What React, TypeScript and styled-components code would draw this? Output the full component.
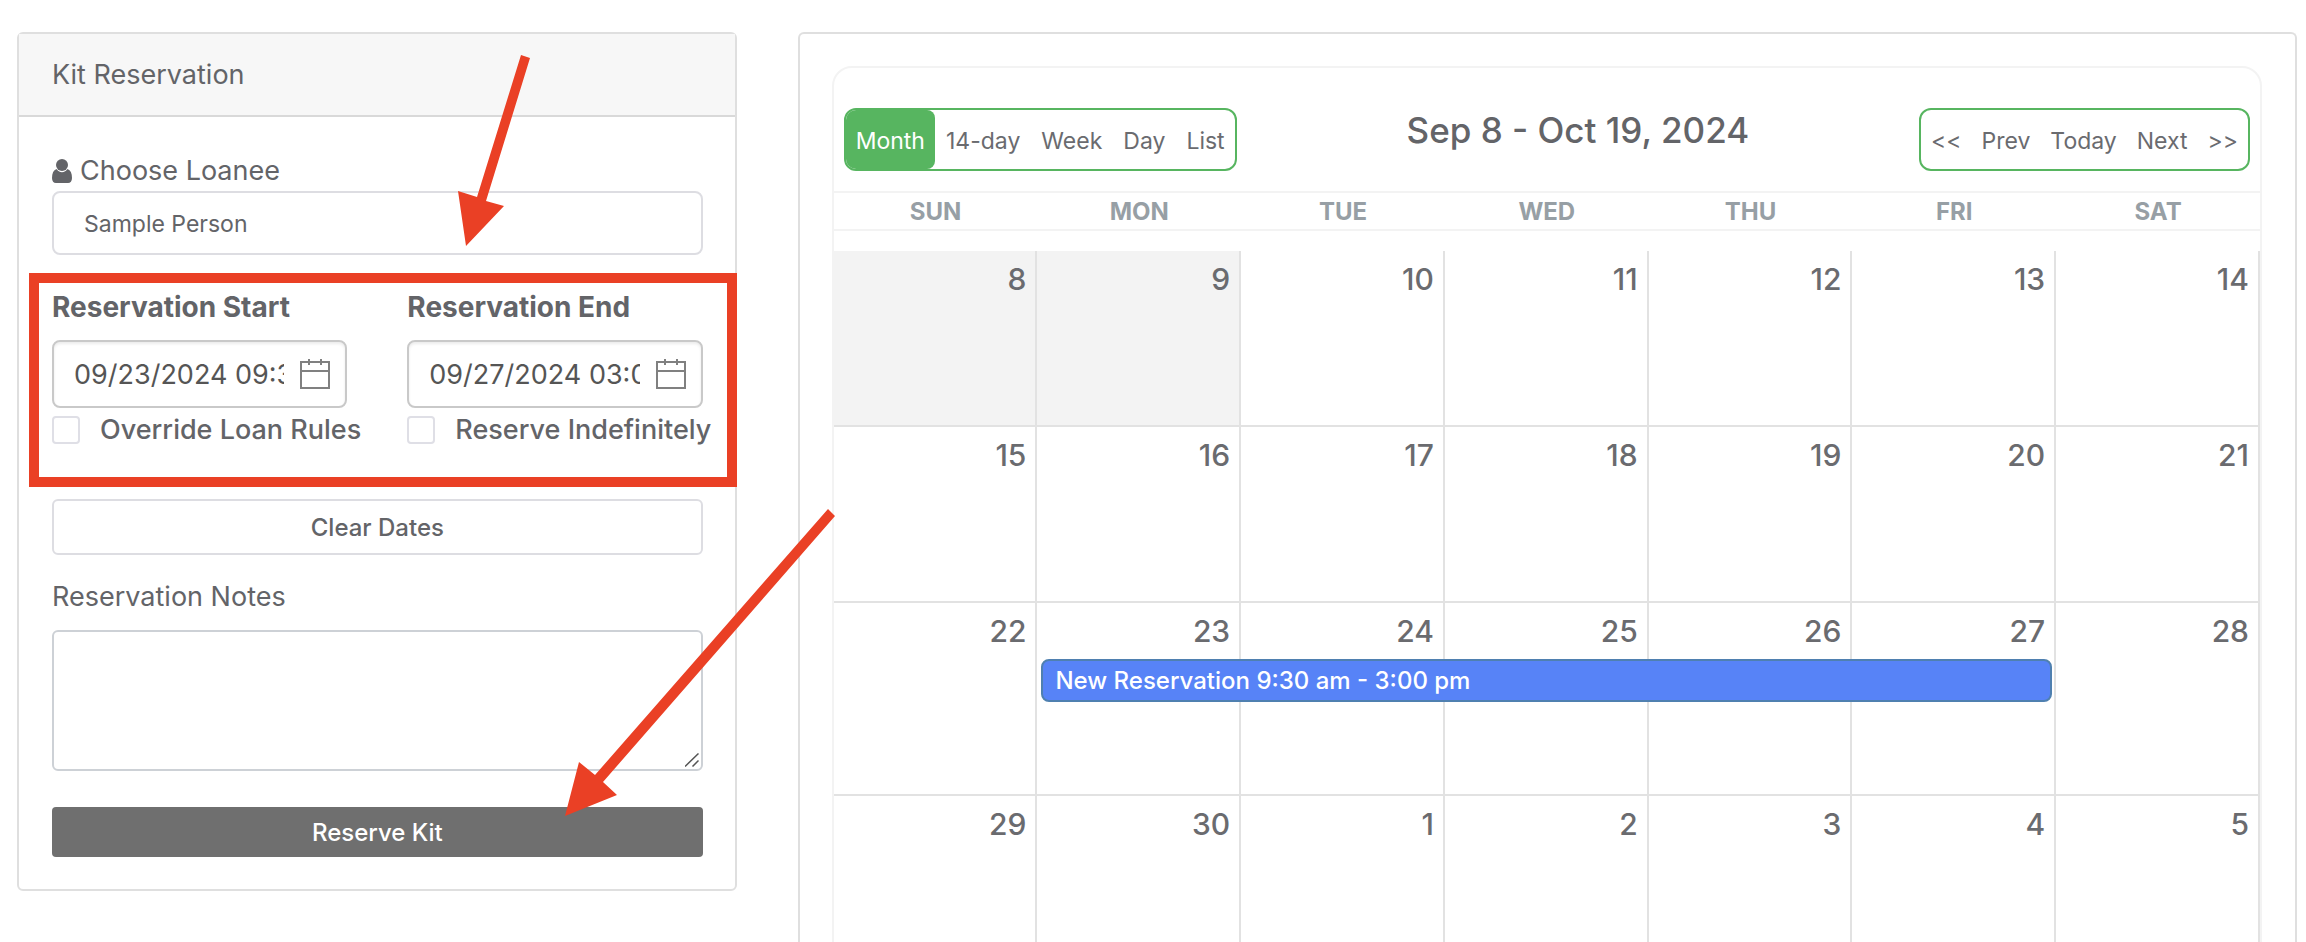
import React from "react";
import styled, { createGlobalStyle, css } from "styled-components";

const GlobalStyle = createGlobalStyle`
  *, *::before, *::after { box-sizing: border-box; }
  body {
    margin: 0;
    background: #fff;
    color: #636468;
    font: 400 28px/40px Inter, "Liberation Sans", sans-serif;
  }
  button, input, select, textarea { font: inherit; color: inherit; margin: 0; }
`;

const Page = styled.main`
  position: relative;
  display: grid;
  grid-template-columns: minmax(0, 12fr) minmax(0, 25fr);
  gap: 61px;
  align-items: start;
  padding: 32px 9px 0 17px;
`;

/* Reservation form */

const FormCard = styled.section`
  border: 2px solid #dfdfdf;
  border-radius: 6px;
`;

const CardHeader = styled.h1`
  margin: 0;
  padding: 21px 33px 20px;
  border-bottom: 2px solid #d9d9d9;
  background: #f7f7f7;
  font-size: 27px;
  font-weight: 400;
  line-height: 40px;
`;

const Form = styled.form`
  display: flex;
  flex-direction: column;
  padding: 34px 32px 32px 33px;
`;

const FieldLabel = styled.label`
  display: flex;
  align-items: center;
  gap: 8px;
  font-size: 27px;
  line-height: 40px;
`;

const LoaneeSelect = styled.select`
  width: 100%;
  height: 64px;
  padding: 2px 30px 0;
  border: 2px solid #dddde2;
  border-radius: 8px;
  background: #fff;
  font-size: 23px;
  appearance: none;
`;

const DateFields = styled.div`
  position: relative;
  display: grid;
  grid-template-columns: minmax(0, 1fr) minmax(0, 1fr);
  gap: 60px;
  margin: 18px 0 12px;
  padding: 14px 0 37px;
`;

const Highlight = styled.div`
  position: absolute;
  inset: 0 -34px 0 -23px;
  border: 10px solid #ea4025;
  pointer-events: none;
`;

const DateField = styled.div`
  display: flex;
  flex-direction: column;
`;

const DateLabel = styled.label`
  margin-bottom: 13px;
  font-size: 28px;
  font-weight: 700;
  line-height: 40px;
`;

const DateBox = styled.div`
  display: flex;
  align-items: center;
  gap: 16px;
  height: 68px;
  margin-bottom: 2px;
  padding: 0 15px 0 20px;
  border: 2px solid #c9c9c9;
  border-radius: 8px;
  box-shadow: inset 0 2px 3px rgba(0, 0, 0, 0.08);
`;

const DateInput = styled.input`
  flex: 1;
  min-width: 0;
  padding: 2px 0 0;
  border: 0;
  background: none;
  color: #555;
  font-size: 27px;
`;

const CheckRow = styled.label`
  display: flex;
  align-items: center;
  gap: 20px;
  font-size: 27px;
  font-weight: 500;
  line-height: 40px;
  white-space: nowrap;
`;

const CheckBox = styled.input`
  flex: none;
  width: 28px;
  height: 28px;
  border: 2px solid #dfdfe6;
  border-radius: 4px;
  background: #fff;
  appearance: none;
`;

const FormButton = styled.button<{ $solid?: boolean }>`
  width: 100%;
  padding: 2px 0 0;
  border-radius: 6px;
  font-size: 24px;
  font-weight: 500;
  ${(p) =>
    p.$solid
      ? css`
          height: 50px;
          border: 0;
          border-radius: 4px;
          background: #6f6f6f;
          color: #fff;
        `
      : css`
          height: 56px;
          border: 2px solid #dddde2;
          background: #fff;
        `}
`;

const NotesField = styled.div`
  display: flex;
  flex-direction: column;
  gap: 13px;
  margin: 22px 0 36px;
`;

const NotesBox = styled.div`
  position: relative;
`;

const Notes = styled.textarea`
  display: block;
  width: 100%;
  height: 141px;
  padding: 12px;
  border: 2px solid #cdd1d6;
  border-radius: 6px;
  resize: none;
`;

const Grip = styled.svg`
  position: absolute;
  right: 4px;
  bottom: 4px;
  pointer-events: none;
`;

/* Calendar */

const CalendarCard = styled.section`
  max-height: calc(100vh - 32px);
  overflow: hidden;
  padding: 32px 33px 0 32px;
  border: 2px solid #dfdfdf;
  border-bottom: 0;
  border-radius: 6px 6px 0 0;
`;

const Calendar = styled.div`
  border: 2px solid #f3f3f3;
  border-radius: 20px 20px 0 0;
`;

const Toolbar = styled.header`
  display: flex;
  align-items: flex-start;
  justify-content: space-between;
  padding: 40px 10px 20px;
`;

const Title = styled.h2`
  margin: 0;
  font-size: 35px;
  font-weight: 500;
  line-height: 44px;
`;

const ButtonGroup = styled.div<{ $spaced?: boolean }>`
  display: flex;
  gap: ${(p) => (p.$spaced ? 1 : 0)}px;
  height: 63px;
  border: 2px solid #57b560;
  border-radius: 12px;
  overflow: hidden;
`;

const GroupButton = styled.button<{ $active?: boolean }>`
  padding: 2px 10px 0;
  border: 0;
  border-radius: 0 8px 8px 0;
  background: ${(p) => (p.$active ? "#57b560" : "transparent")};
  color: ${(p) => (p.$active ? "#fff" : "#6a6b6f")};
  font-size: 23px;
`;

const MonthTable = styled.table`
  width: 100%;
  border-collapse: separate;
  border-spacing: 0;
  table-layout: fixed;
`;

const WeekdayCell = styled.th`
  height: 40px;
  padding: 2px 0 0;
  border: solid #f3f3f3;
  border-width: 2px 0;
  color: #979fa5;
  font-size: 24px;
  font-weight: 700;
  line-height: 34px;
`;

const Spacer = styled.td`
  height: 20px;
  padding: 0;
`;

const DayCell = styled.td<{ $past?: boolean; $tall?: boolean }>`
  position: relative;
  height: ${(p) => (p.$tall ? 193 : 176)}px;
  padding: 8px 9px 0 0;
  border: solid #e2e2e2;
  border-width: 0 2px 2px 0;
  background: ${(p) => (p.$past ? "#f3f3f3" : "#fff")};
  color: #6a6b6f;
  font-size: 30px;
  font-weight: 500;
  line-height: 40px;
  text-align: right;
  vertical-align: top;
`;

const Event = styled.button`
  position: absolute;
  z-index: 1;
  top: 56px;
  left: 4px;
  width: calc(500% + 2px);
  height: 43px;
  padding: 0 12px;
  border: 2px solid #4f80b0;
  border-radius: 8px;
  background: #5783f7;
  color: #fff;
  font-size: 24px;
  line-height: 38px;
  text-align: left;
`;

const Arrows = styled.svg`
  position: absolute;
  top: 0;
  left: 0;
  z-index: 2;
  pointer-events: none;
`;

const views = ["Month", "14-day", "Week", "Day", "List"];
const steps = ["<<", "Prev", "Today", "Next", ">>"];
const weekdays = ["SUN", "MON", "TUE", "WED", "THU", "FRI", "SAT"];
const weeks = [
  [8, 9, 10, 11, 12, 13, 14],
  [15, 16, 17, 18, 19, 20, 21],
  [22, 23, 24, 25, 26, 27, 28],
  [29, 30, 1, 2, 3, 4, 5],
];

const UserIcon = () => (
  <svg width="20" height="24" viewBox="0 0 20 24" fill="#636468" aria-hidden="true">
    <ellipse cx="10" cy="6" rx="6" ry="6" />
    <path d="M4.500 10C1.500 11 0 14 0 19c0 3 1.500 5 4 5h12c2.500 0 4-2 4-5 0-5-1.500-8-4.500-9C14.300 12 12.300 13.200 10 13.200S5.700 12 4.500 10Z" />
  </svg>
);

const CalendarIcon = () => (
  <svg width="30" height="30" viewBox="0 0 30 30" fill="none" stroke="#808080" strokeWidth="2" aria-hidden="true">
    <rect x="1" y="3" width="28" height="26" />
    <path d="M1 12H29M9 0V6M21 0V6" />
  </svg>
);

function DatePicker(props: { id: string; label: string; value: string; option: string }) {
  return (
    <DateField>
      <DateLabel htmlFor={props.id}>{props.label}</DateLabel>
      <DateBox>
        <DateInput id={props.id} type="text" defaultValue={props.value} />
        <CalendarIcon />
      </DateBox>
      <CheckRow>
        <CheckBox type="checkbox" />
        {props.option}
      </CheckRow>
    </DateField>
  );
}

export default function App() {
  return (
    <>
      <GlobalStyle />
      <Page>
        <FormCard>
          <CardHeader>Kit Reservation</CardHeader>
          <Form onSubmit={(e) => e.preventDefault()}>
            <FieldLabel htmlFor="loanee">
              <UserIcon />
              Choose Loanee
            </FieldLabel>
            <LoaneeSelect id="loanee">
              <option>Sample Person</option>
            </LoaneeSelect>
            <DateFields>
              <DatePicker id="start" label="Reservation Start" value="09/23/2024 09:30 AM" option="Override Loan Rules" />
              <DatePicker id="end" label="Reservation End" value="09/27/2024 03:00 PM" option="Reserve Indefinitely" />
              <Highlight />
            </DateFields>
            <FormButton type="button">Clear Dates</FormButton>
            <NotesField>
              <FieldLabel htmlFor="notes">Reservation Notes</FieldLabel>
              <NotesBox>
                <Notes id="notes" />
                <Grip width="14" height="14" viewBox="0 0 14 14" stroke="#555" strokeWidth="1.5" aria-hidden="true">
                  <path d="M0 13.500L13.500 0.500M7.500 13.500L13.500 7.500" />
                </Grip>
              </NotesBox>
            </NotesField>
            <FormButton type="submit" $solid>
              Reserve Kit
            </FormButton>
          </Form>
        </FormCard>

        <CalendarCard>
          <Calendar>
            <Toolbar>
              <ButtonGroup $spaced>
                {views.map((v) => (
                  <GroupButton key={v} type="button" $active={v === "Month"}>
                    {v}
                  </GroupButton>
                ))}
              </ButtonGroup>
              <Title>Sep 8 - Oct 19, 2024</Title>
              <ButtonGroup>
                {steps.map((s) => (
                  <GroupButton key={s} type="button">
                    {s}
                  </GroupButton>
                ))}
              </ButtonGroup>
            </Toolbar>
            <MonthTable>
              <thead>
                <tr>
                  {weekdays.map((d) => (
                    <WeekdayCell key={d} scope="col">
                      {d}
                    </WeekdayCell>
                  ))}
                </tr>
              </thead>
              <tbody>
                <tr>
                  <Spacer colSpan={7} />
                </tr>
                {weeks.map((week, i) => (
                  <tr key={i}>
                    {week.map((day) => (
                      <DayCell key={day} $past={i === 0 && day < 10} $tall={i === 2}>
                        {day}
                        {day === 23 && <Event type="button">New Reservation 9:30 am - 3:00 pm</Event>}
                      </DayCell>
                    ))}
                  </tr>
                ))}
              </tbody>
            </MonthTable>
          </Calendar>
        </CalendarCard>

        <Arrows width="860" height="840" viewBox="0 0 860 840" fill="#ea4025" aria-hidden="true">
          <path d="M521 55L530 58L486 201L504 206L466 246L458 191L477 197Z" />
          <path d="M828 509L835 516L603 782L617 795L565 816L579 762L595 775Z" />
        </Arrows>
      </Page>
    </>
  );
}
